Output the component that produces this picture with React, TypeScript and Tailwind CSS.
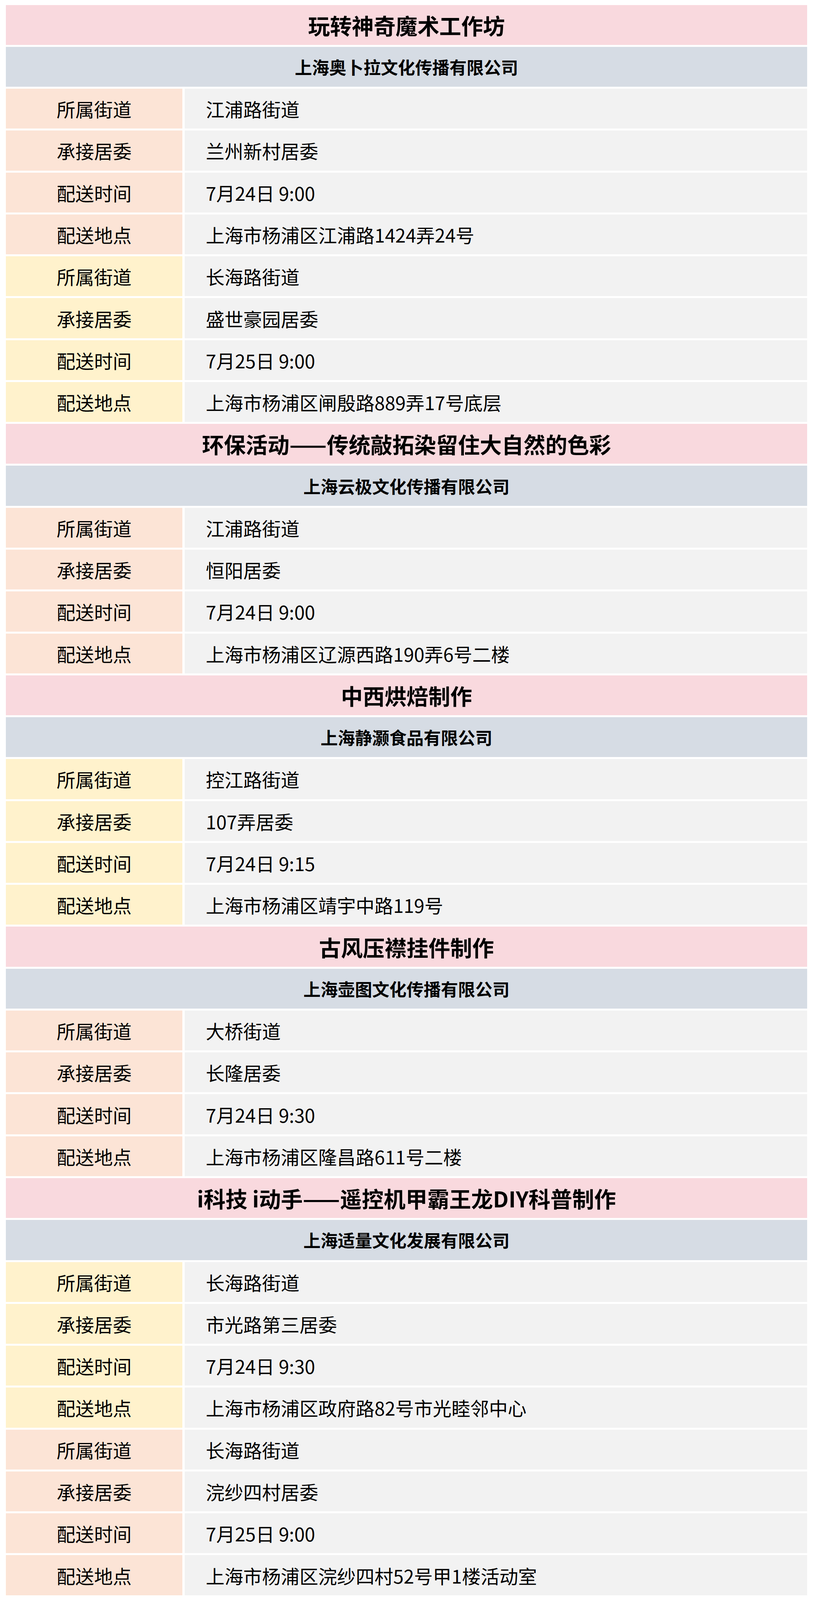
import React from "react";

type Row = [string, string];
type Section = {
  title: string;
  company: string;
  groups: { color: "peach" | "yellow"; rows: Row[] }[];
};

const sections: Section[] = [
  {
    title: "玩转神奇魔术工作坊",
    company: "上海奥卜拉文化传播有限公司",
    groups: [
      {
        color: "peach",
        rows: [
          ["所属街道", "江浦路街道"],
          ["承接居委", "兰州新村居委"],
          ["配送时间", "7月24日 9:00"],
          ["配送地点", "上海市杨浦区江浦路1424弄24号"],
        ],
      },
      {
        color: "yellow",
        rows: [
          ["所属街道", "长海路街道"],
          ["承接居委", "盛世豪园居委"],
          ["配送时间", "7月25日 9:00"],
          ["配送地点", "上海市杨浦区闸殷路889弄17号底层"],
        ],
      },
    ],
  },
  {
    title: "环保活动——传统敲拓染留住大自然的色彩",
    company: "上海云极文化传播有限公司",
    groups: [
      {
        color: "peach",
        rows: [
          ["所属街道", "江浦路街道"],
          ["承接居委", "恒阳居委"],
          ["配送时间", "7月24日 9:00"],
          ["配送地点", "上海市杨浦区辽源西路190弄6号二楼"],
        ],
      },
    ],
  },
  {
    title: "中西烘焙制作",
    company: "上海静灏食品有限公司",
    groups: [
      {
        color: "yellow",
        rows: [
          ["所属街道", "控江路街道"],
          ["承接居委", "107弄居委"],
          ["配送时间", "7月24日 9:15"],
          ["配送地点", "上海市杨浦区靖宇中路119号"],
        ],
      },
    ],
  },
  {
    title: "古风压襟挂件制作",
    company: "上海壶图文化传播有限公司",
    groups: [
      {
        color: "peach",
        rows: [
          ["所属街道", "大桥街道"],
          ["承接居委", "长隆居委"],
          ["配送时间", "7月24日 9:30"],
          ["配送地点", "上海市杨浦区隆昌路611号二楼"],
        ],
      },
    ],
  },
  {
    title: "i科技 i动手——遥控机甲霸王龙DIY科普制作",
    company: "上海适量文化发展有限公司",
    groups: [
      {
        color: "yellow",
        rows: [
          ["所属街道", "长海路街道"],
          ["承接居委", "市光路第三居委"],
          ["配送时间", "7月24日 9:30"],
          ["配送地点", "上海市杨浦区政府路82号市光睦邻中心"],
        ],
      },
      {
        color: "peach",
        rows: [
          ["所属街道", "长海路街道"],
          ["承接居委", "浣纱四村居委"],
          ["配送时间", "7月25日 9:00"],
          ["配送地点", "上海市杨浦区浣纱四村52号甲1楼活动室"],
        ],
      },
    ],
  },
];

export default function App() {
  return (
    <div
      className="w-full h-screen overflow-hidden bg-white px-[15px] py-[0.307vh] flex flex-col gap-[0.1228vh] text-black"
      style={{ fontFamily: '"Noto Sans CJK SC", "Noto Sans", sans-serif' }}
    >
      {sections.map((s, si) => (
        <React.Fragment key={si}>
          <div className="flex-1 min-h-0 bg-[#f9d9de] flex items-center justify-center">
            <span className="text-[56px] font-bold leading-none">{s.title}</span>
          </div>
          <div className="flex-1 min-h-0 bg-[#d6dce4] flex items-center justify-center">
            <span className="text-[44px] font-bold leading-none">{s.company}</span>
          </div>
          {s.groups.map((g, gi) =>
            g.rows.map((r, ri) => (
              <div key={`${gi}-${ri}`} className="flex-1 min-h-0 flex gap-[6px]">
                <div
                  className={
                    g.color === "peach"
                      ? "w-[452px] shrink-0 bg-[#fce4d6] flex items-center justify-center"
                      : "w-[452px] shrink-0 bg-[#fff2cc] flex items-center justify-center"
                  }
                >
                  <span className="text-[48px] leading-none">{r[0]}</span>
                </div>
                <div className="flex-1 bg-[#f2f2f2] flex items-center pl-[54px]">
                  <span className="text-[48px] leading-none">{r[1]}</span>
                </div>
              </div>
            ))
          )}
        </React.Fragment>
      ))}
    </div>
  );
}
